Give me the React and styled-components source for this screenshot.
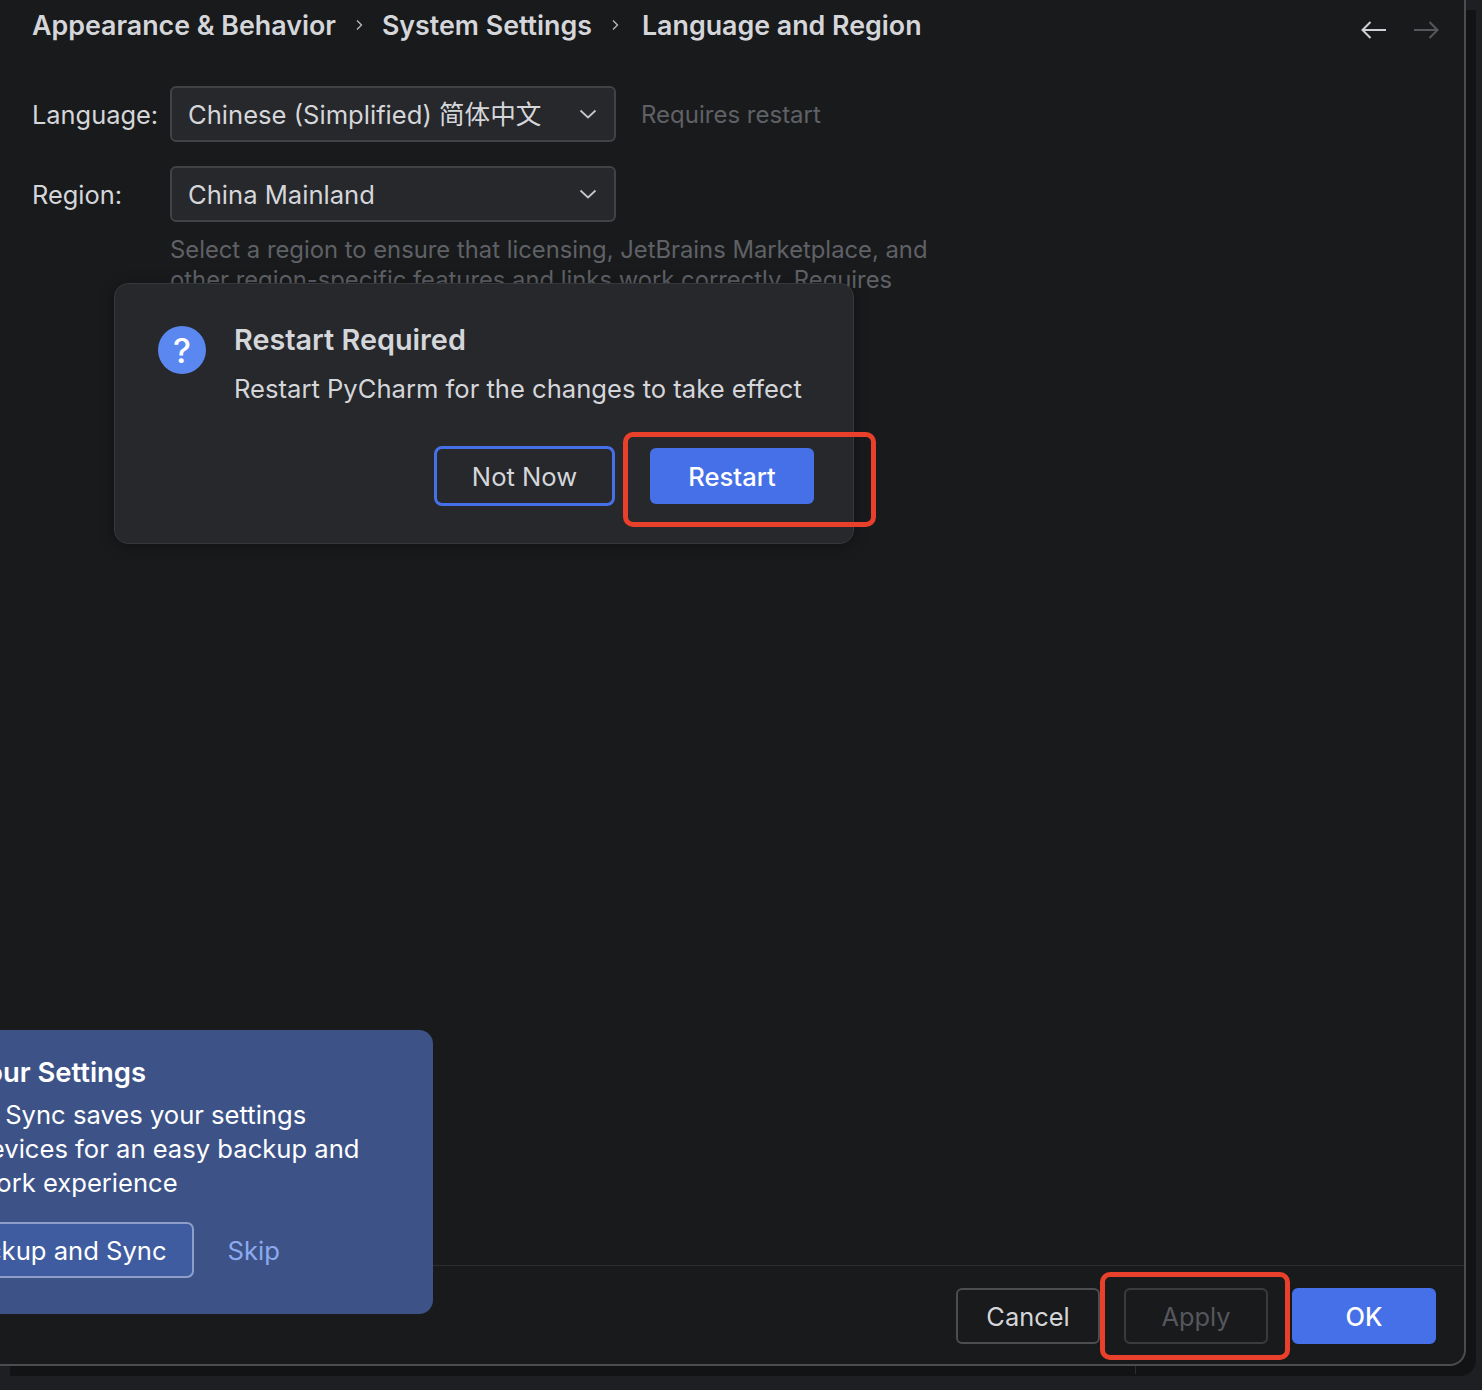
import React from 'react';
import styled, { createGlobalStyle } from 'styled-components';

const GlobalStyle = createGlobalStyle`
    html, body {
        margin: 0;
        padding: 0;
        background: #1e1f22;
        overflow: hidden;
    }
    * {
        box-sizing: border-box;
    }
`;

const Chevron = () => (
    <svg width="10" height="14" viewBox="0 0 10 14" fill="none">
        <path d="M3 2.5 L7.5 7 L3 11.5" stroke="#b4b6bb" strokeWidth="1.4" />
    </svg>
);

const DownArrow = () => (
    <svg width="18" height="10" viewBox="0 0 18 10" fill="none">
        <path d="M1.5 1.5 L9 8.5 L16.5 1.5" stroke="#c4c6cb" strokeWidth="1.8" />
    </svg>
);

const NavArrow = ({ color, flip }) => (
    <svg width="26" height="20" viewBox="0 0 26 20" fill="none" style={{ transform: flip ? 'scaleX(-1)' : 'none' }}>
        <path d="M1.5 10 H25 M9.5 2 L1.5 10 L9.5 18" stroke={color} strokeWidth="2" />
    </svg>
);

const App = () => {
    return (
        <>
            <GlobalStyle />
            <Page>
                <Window>
                    <Header>
                        <Crumbs>
                            <Crumb>Appearance &amp; Behavior</Crumb>
                            <Chevron />
                            <Crumb>System Settings</Crumb>
                            <Chevron />
                            <LastCrumb>Language and Region</LastCrumb>
                        </Crumbs>
                        <NavGroup>
                            <NavArrow color="#ced0d6" />
                            <NavArrow color="#55575c" flip />
                        </NavGroup>
                    </Header>
                    <Form>
                        <Row>
                            <Label>Language:</Label>
                            <Select>
                                <SelectValue>Chinese (Simplified) 简体中文</SelectValue>
                                <DownArrow />
                            </Select>
                            <Hint>Requires restart</Hint>
                        </Row>
                        <Row>
                            <Label>Region:</Label>
                            <Select>
                                <SelectValue>China Mainland</SelectValue>
                                <DownArrow />
                            </Select>
                        </Row>
                        <Description>
                            Select a region to ensure that licensing, JetBrains Marketplace, and
                            other region-specific features and links work correctly. Requires
                            restart.
                        </Description>
                    </Form>
                    <Footer>
                        <FooterButton>Cancel</FooterButton>
                        <FooterButton disabled>Apply</FooterButton>
                        <FooterButton primary>OK</FooterButton>
                    </Footer>

                    <Dialog>
                        <QuestionIcon>?</QuestionIcon>
                        <DialogBody>
                            <DialogTitle>Restart Required</DialogTitle>
                            <DialogText>Restart PyCharm for the changes to take effect</DialogText>
                            <DialogActions>
                                <NotNowButton>Not Now</NotNowButton>
                                <RestartButton>Restart</RestartButton>
                            </DialogActions>
                        </DialogBody>
                    </Dialog>

                    <Notice>
                        <NoticeTitle>Back Up Your Settings</NoticeTitle>
                        <NoticeText>
                            Backup and Sync saves your settings<br />
                            between&nbsp; devices for an easy backup and<br />
                            seamless work experience
                        </NoticeText>
                        <NoticeActions>
                            <NoticeButton>Enable Backup and Sync</NoticeButton>
                            <SkipLink>Skip</SkipLink>
                        </NoticeActions>
                    </Notice>

                    <RestartMark />
                    <ApplyMark />
                </Window>
                <WindowTick />
            </Page>
        </>
    );
};
export default App;

const Page = styled.div`
    position: relative;
    width: 100vw;
    height: 100vh;
    overflow: hidden;
    font-family: 'Inter', 'Noto Sans CJK SC', sans-serif;
    font-size: 25.4px;
    color: #d5d6da;
`;

const Window = styled.div`
    position: relative;
    display: flex;
    flex-direction: column;
    width: 1466px;
    height: 1366px;
    background: #191a1c;
    border-right: 2px solid #4b4c4f;
    border-bottom: 2px solid #4b4c4f;
    border-bottom-right-radius: 16px;
    box-shadow: 10px 10px 0 #121315;
`;

const WindowTick = styled.div`
    position: absolute;
    left: 1135px;
    top: 1366px;
    width: 1px;
    height: 8px;
    background: #2c2d30;
`;

const Header = styled.div`
    display: flex;
    justify-content: space-between;
    padding: 8px 25px 0 32px;
    height: 86px;
`;

const Crumbs = styled.div`
    display: flex;
    align-items: center;
    gap: 18px;
    height: 34px;
`;

const Crumb = styled.span`
    font-size: 26.8px;
    font-weight: 600;
    color: #d5d6da;
    line-height: 33px;
`;

const LastCrumb = styled(Crumb)`
    margin-left: 4px;
`;

const NavGroup = styled.div`
    display: flex;
    gap: 26px;
    padding-top: 12px;
`;

const Form = styled.div`
    display: flex;
    flex-direction: column;
    flex: 1;
    gap: 24px;
    padding-left: 32px;
`;

const Row = styled.div`
    display: flex;
    align-items: center;
    height: 56px;
`;

const Label = styled.div`
    width: 138px;
`;

const Select = styled.div`
    display: flex;
    align-items: center;
    justify-content: space-between;
    width: 446px;
    height: 56px;
    padding: 0 17px 0 16px;
    background: #26282c;
    border: 2px solid #404246;
    border-radius: 6px;
`;

const SelectValue = styled.span`
    font-size: 25.6px;
    line-height: 30px;
    height: 30px;
    margin-top: 2px;
`;

const Hint = styled.div`
    margin-left: 25px;
    color: #5f6166;
    font-size: 24px;
`;

const Description = styled.div`
    width: 790px;
    margin: -11px 0 0 138px;
    color: #5f6166;
    font-size: 23.8px;
    line-height: 30px;
`;

const Footer = styled.div`
    display: flex;
    justify-content: flex-end;
    gap: 24px;
    height: 99px;
    padding: 22px 28px 0 0;
    border-top: 1px solid #2c2d30;
`;

const FooterButton = styled.div`
    display: flex;
    align-items: center;
    justify-content: center;
    width: 144px;
    height: 56px;
    border-radius: 6px;
    border: 2px solid ${({ disabled, primary }) => primary ? '#4570e8' : disabled ? '#3a3b3f' : '#4b4d51'};
    background: ${({ primary }) => primary ? '#4570e8' : 'transparent'};
    color: ${({ disabled, primary }) => primary ? '#ffffff' : disabled ? '#55575c' : '#d5d6da'};
    font-weight: ${({ primary }) => primary ? 500 : 400};
`;

const Dialog = styled.div`
    position: absolute;
    left: 114px;
    top: 283px;
    display: flex;
    gap: 28px;
    width: 740px;
    height: 261px;
    padding: 42px 0 0 43px;
    background: #26282c;
    border: 1px solid #36383c;
    border-radius: 14px;
    box-shadow: 0 2px 14px rgba(0, 0, 0, .35);
    font-size: 25.6px;
`;

const QuestionIcon = styled.div`
    display: flex;
    align-items: center;
    justify-content: center;
    flex-shrink: 0;
    width: 48px;
    height: 48px;
    border-radius: 50%;
    background: #5b87f0;
    color: #ffffff;
    font-size: 34px;
    font-weight: 500;
`;

const DialogBody = styled.div`
    display: flex;
    flex-direction: column;
    flex: 1;
`;

const DialogTitle = styled.div`
    font-weight: 600;
    font-size: 28.8px;
    line-height: 28px;
    color: #d5d6da;
`;

const DialogText = styled.div`
    margin-top: 19px;
    line-height: 32px;
`;

const DialogActions = styled.div`
    display: flex;
    align-items: center;
    gap: 35px;
    margin: 41px 0 0 200px;
`;

const NotNowButton = styled.div`
    display: flex;
    align-items: center;
    justify-content: center;
    width: 181px;
    height: 60px;
    border: 3px solid #4570e8;
    border-radius: 8px;
`;

const RestartButton = styled.div`
    display: flex;
    align-items: center;
    justify-content: center;
    width: 164px;
    height: 56px;
    border-radius: 6px;
    background: #4570e8;
    color: #ffffff;
    font-weight: 500;
`;

const Notice = styled.div`
    position: absolute;
    left: -145px;
    top: 1030px;
    width: 578px;
    height: 284px;
    padding: 26px 0 0 0;
    background: #3d5388;
    border-radius: 14px;
    color: #ffffff;
    font-size: 25.6px;
`;

const NoticeTitle = styled.div`
    margin-left: -2px;
    font-size: 27.4px;
    font-weight: 600;
    line-height: 33px;
`;

const NoticeText = styled.div`
    margin-top: 9px;
    line-height: 34px;
`;

const NoticeActions = styled.div`
    display: flex;
    align-items: center;
    gap: 34px;
    margin-top: 22px;
`;

const NoticeButton = styled.div`
    display: flex;
    align-items: center;
    height: 56px;
    padding: 0 25px 0 10px;
    background: #3f5ca0;
    border: 2px solid #8d9fc8;
    border-radius: 7px;
`;

const SkipLink = styled.span`
    color: #8caaf0;
`;

const RestartMark = styled.div`
    position: absolute;
    left: 623px;
    top: 432px;
    width: 253px;
    height: 95px;
    border: 5px solid #e8402a;
    border-radius: 10px;
`;

const ApplyMark = styled.div`
    position: absolute;
    left: 1100px;
    top: 1272px;
    width: 190px;
    height: 88px;
    border: 5px solid #e8402a;
    border-radius: 10px;
`;
